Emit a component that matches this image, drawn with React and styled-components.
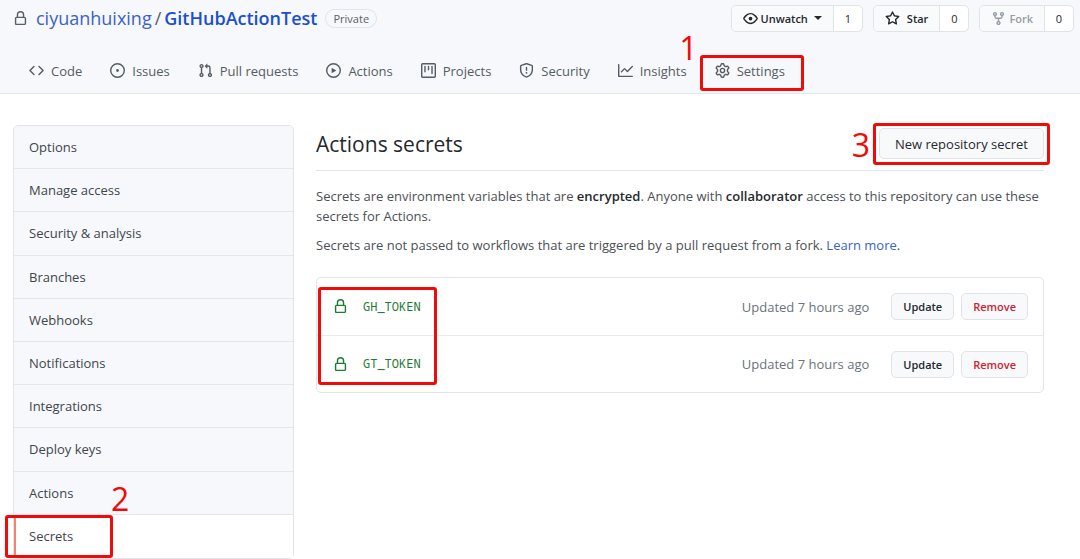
import React from "react";
import styled, { createGlobalStyle } from "styled-components";

const GlobalStyle = createGlobalStyle`
  *, *::before, *::after { box-sizing: border-box; }
  body {
    margin: 0;
    background: #fff;
    color: #24292e;
    font-family: "Open Sans", "Noto Sans", sans-serif;
    font-size: 13px;
    line-height: 20px;
    overflow-x: hidden;
  }
  a { color: inherit; text-decoration: none; }
  button { font-family: inherit; cursor: pointer; }
  h1, h2, p, ul { margin: 0; padding: 0; }
  ul { list-style: none; }
`;

const paths = {
  lock: "M4 4v2h-.25A1.75 1.75 0 002 7.75v5.5c0 .966.784 1.75 1.75 1.75h8.5A1.75 1.75 0 0014 13.25v-5.5A1.75 1.75 0 0012.25 6H12V4a4 4 0 10-8 0zm6.5 2V4a2.5 2.5 0 00-5 0v2h5zM12 7.5h.25a.25.25 0 01.25.25v5.5a.25.25 0 01-.25.25h-8.5a.25.25 0 01-.25-.25v-5.5a.25.25 0 01.25-.25H12z",
  code: "M4.72 3.22a.75.75 0 011.06 1.06L2.06 8l3.72 3.72a.75.75 0 11-1.06 1.06L.47 8.53a.75.75 0 010-1.06l4.25-4.25zm6.56 0a.75.75 0 10-1.06 1.06L13.94 8l-3.72 3.72a.75.75 0 101.06 1.06l4.25-4.25a.75.75 0 000-1.06l-4.25-4.25z",
  issue: "M8 9.5a1.5 1.5 0 100-3 1.5 1.5 0 000 3zM8 0a8 8 0 100 16A8 8 0 008 0zM1.5 8a6.5 6.5 0 1113 0 6.5 6.5 0 01-13 0z",
  pull: "M7.177 3.073L9.573.677A.25.25 0 0110 .854v4.792a.25.25 0 01-.427.177L7.177 3.427a.25.25 0 010-.354zM3.75 2.5a.75.75 0 100 1.5.75.75 0 000-1.5zm-2.25.75a2.25 2.25 0 113 2.122v5.256a2.251 2.251 0 11-1.5 0V5.372A2.25 2.25 0 011.5 3.25zM11 2.5h-1V4h1a1 1 0 011 1v5.628a2.251 2.251 0 101.5 0V5A2.5 2.5 0 0011 2.5zm1 10.25a.75.75 0 111.5 0 .75.75 0 01-1.5 0zM3.75 12a.75.75 0 100 1.5.75.75 0 000-1.5z",
  play: "M1.5 8a6.5 6.5 0 1113 0 6.5 6.5 0 01-13 0zM8 0a8 8 0 100 16A8 8 0 008 0zM6.379 5.227A.25.25 0 006 5.442v5.117a.25.25 0 00.379.214l4.264-2.559a.25.25 0 000-.428L6.379 5.227z",
  project: "M1.75 0A1.75 1.75 0 000 1.75v12.5C0 15.216.784 16 1.75 16h12.5A1.75 1.75 0 0016 14.25V1.75A1.75 1.75 0 0014.25 0H1.75zM1.5 1.75a.25.25 0 01.25-.25h12.5a.25.25 0 01.25.25v12.5a.25.25 0 01-.25.25H1.75a.25.25 0 01-.25-.25V1.75zM11.75 3a.75.75 0 00-.75.75v7.5a.75.75 0 001.5 0v-7.5a.75.75 0 00-.75-.75zm-8.25.75a.75.75 0 011.5 0v5.5a.75.75 0 01-1.5 0v-5.5zM8 3a.75.75 0 00-.75.75v3.5a.75.75 0 001.5 0v-3.5A.75.75 0 008 3z",
  shield: "M7.467.133a1.75 1.75 0 011.066 0l5.25 1.68A1.75 1.75 0 0115 3.48V7c0 1.566-.32 3.182-1.303 4.682-.983 1.498-2.585 2.813-5.032 3.855a1.7 1.7 0 01-1.33 0c-2.447-1.042-4.049-2.357-5.032-3.855C1.32 10.182 1 8.566 1 7V3.48a1.75 1.75 0 011.217-1.667l5.25-1.68zm.61 1.429a.25.25 0 00-.153 0l-5.25 1.68a.25.25 0 00-.174.238V7c0 1.358.275 2.666 1.057 3.86.784 1.194 2.121 2.34 4.366 3.297a.2.2 0 00.154 0c2.245-.956 3.582-2.104 4.366-3.298C13.225 9.666 13.5 8.36 13.5 7V3.48a.25.25 0 00-.174-.237l-5.25-1.68zM9 10.5a1 1 0 11-2 0 1 1 0 012 0zm-.25-5.75a.75.75 0 10-1.5 0v3a.75.75 0 001.5 0v-3z",
  graph: "M1.5 1.75a.75.75 0 00-1.5 0v12.5c0 .414.336.75.75.75h14.5a.75.75 0 000-1.5H1.5V1.75zm14.28 2.53a.75.75 0 00-1.06-1.06L10 7.94 7.53 5.47a.75.75 0 00-1.06 0L3.22 8.72a.75.75 0 001.06 1.06L7 7.06l2.47 2.47a.75.75 0 001.06 0l5.25-5.25z",
  gear: "M7.429 1.525a6.593 6.593 0 011.142 0c.036.003.108.036.137.146l.289 1.105c.147.56.55.967.997 1.189.174.086.341.183.501.29.417.278.97.423 1.53.27l1.102-.303c.11-.03.175.016.195.046.219.31.41.641.573.989.014.031.022.11-.059.19l-.815.806c-.411.406-.562.957-.53 1.456a4.588 4.588 0 010 .582c-.032.499.119 1.05.53 1.456l.815.806c.08.08.073.159.059.19a6.494 6.494 0 01-.573.99c-.02.029-.086.074-.195.045l-1.103-.303c-.559-.153-1.112-.008-1.529.27-.16.107-.327.204-.5.29-.449.222-.851.628-.998 1.189l-.289 1.105c-.029.11-.101.143-.137.146a6.613 6.613 0 01-1.142 0c-.036-.003-.108-.037-.137-.146l-.289-1.105c-.147-.56-.55-.967-.997-1.189a4.502 4.502 0 01-.501-.29c-.417-.278-.97-.423-1.53-.27l-1.102.303c-.11.03-.175-.016-.195-.046a6.492 6.492 0 01-.573-.989c-.014-.031-.022-.11.059-.19l.815-.806c.411-.406.562-.957.53-1.456a4.587 4.587 0 010-.582c.032-.499-.119-1.05-.53-1.456l-.815-.806c-.08-.08-.073-.159-.059-.19a6.44 6.44 0 01.573-.99c.02-.029.086-.075.195-.045l1.103.303c.559.153 1.112.008 1.529-.27.16-.107.327-.204.5-.29.449-.222.851-.628.998-1.189l.289-1.105c.029-.11.101-.143.137-.146zM8 0c-.236 0-.47.01-.701.03-.743.065-1.29.615-1.458 1.261l-.29 1.106c-.017.066-.078.158-.211.224a5.994 5.994 0 00-.668.386c-.123.082-.233.09-.3.071L3.27 2.776c-.644-.177-1.392.02-1.82.63a7.977 7.977 0 00-.704 1.217c-.315.675-.111 1.422.363 1.891l.815.806c.05.048.098.147.088.294a6.084 6.084 0 000 .772c.01.147-.038.246-.088.294l-.815.806c-.474.469-.678 1.216-.363 1.891.2.428.436.835.704 1.218.428.609 1.176.806 1.82.63l1.103-.303c.066-.019.176-.011.299.071.213.143.436.272.668.386.133.066.194.158.212.224l.289 1.106c.169.646.715 1.196 1.458 1.26a8.094 8.094 0 001.402 0c.743-.064 1.29-.614 1.458-1.26l.29-1.106c.017-.066.078-.158.211-.224a5.98 5.98 0 00.668-.386c.123-.082.233-.09.3-.071l1.102.302c.644.177 1.392-.02 1.82-.63.268-.382.505-.789.704-1.217.315-.675.111-1.422-.364-1.891l-.814-.806c-.05-.048-.098-.147-.088-.294a6.1 6.1 0 000-.772c-.01-.147.039-.246.088-.294l.814-.806c.475-.469.679-1.216.364-1.891a7.992 7.992 0 00-.704-1.218c-.428-.609-1.176-.806-1.82-.63l-1.103.303c-.066.019-.176.011-.299-.071a5.991 5.991 0 00-.668-.386c-.133-.066-.194-.158-.212-.224L10.16 1.29C9.99.645 9.444.095 8.701.031A8.094 8.094 0 008 0zm1.5 8a1.5 1.5 0 11-3 0 1.5 1.5 0 013 0zM11 8a3 3 0 11-6 0 3 3 0 016 0z",
  eye: "M1.679 7.932c.412-.621 1.242-1.75 2.366-2.717C5.175 4.242 6.527 3.5 8 3.5c1.473 0 2.824.742 3.955 1.715 1.124.967 1.954 2.096 2.366 2.717a.119.119 0 010 .136c-.412.621-1.242 1.75-2.366 2.717C10.825 11.758 9.473 12.5 8 12.5c-1.473 0-2.824-.742-3.955-1.715C2.92 9.818 2.09 8.69 1.679 8.068a.119.119 0 010-.136zM8 2c-1.981 0-3.67.992-4.933 2.078C1.797 5.169.88 6.423.43 7.1a1.619 1.619 0 000 1.798c.45.678 1.367 1.932 2.637 3.024C4.329 13.008 6.019 14 8 14c1.981 0 3.67-.992 4.933-2.078 1.27-1.091 2.187-2.345 2.637-3.023a1.619 1.619 0 000-1.798c-.45-.678-1.367-1.932-2.637-3.023C11.671 2.992 9.981 2 8 2zm0 8a2 2 0 100-4 2 2 0 000 4z",
  star: "M8 .25a.75.75 0 01.673.418l1.882 3.815 4.21.612a.75.75 0 01.416 1.279l-3.046 2.97.719 4.192a.75.75 0 01-1.088.791L8 12.347l-3.766 1.98a.75.75 0 01-1.088-.79l.72-4.194L.818 6.374a.75.75 0 01.416-1.28l4.21-.611L7.327.668A.75.75 0 018 .25zm0 2.445L6.615 5.5a.75.75 0 01-.564.41l-3.097.45 2.24 2.184a.75.75 0 01.216.664l-.528 3.084 2.769-1.456a.75.75 0 01.698 0l2.77 1.456-.53-3.084a.75.75 0 01.216-.664l2.24-2.183-3.096-.45a.75.75 0 01-.564-.41L8 2.694z",
  fork: "M5 3.25a.75.75 0 11-1.5 0 .75.75 0 011.5 0zm0 2.122a2.25 2.25 0 10-1.5 0v.878A2.25 2.25 0 005.75 8.5h1.5v2.128a2.251 2.251 0 101.5 0V8.5h1.5a2.25 2.25 0 002.25-2.25v-.878a2.25 2.25 0 10-1.5 0v.878a.75.75 0 01-.75.75h-4.5A.75.75 0 015 6.25v-.878zm3.75 7.378a.75.75 0 11-1.5 0 .75.75 0 011.5 0zm3-8.75a.75.75 0 100-1.5.75.75 0 000 1.5z",
};

const Svg = styled.svg`
  display: block;
  flex: none;
  fill: currentColor;
`;

function Icon({ name, size = 15 }) {
  return (
    <Svg viewBox="0 0 16 16" width={size} height={size} aria-hidden="true">
      <path fillRule="evenodd" d={paths[name]} />
    </Svg>
  );
}

const Header = styled.header`
  background: #f6f8fb;
  border-bottom: 1px solid #e3e6ea;
`;

const TitleBar = styled.div`
  display: flex;
  justify-content: space-between;
  align-items: center;
  height: 36px;
  padding: 0 6px 0 13px;
`;

const RepoTitle = styled.h1`
  display: flex;
  align-items: center;
  gap: 8px;
  font-size: 18px;
  font-weight: 400;
  line-height: 28px;
  color: #586069;
  white-space: nowrap;
`;

const RepoPath = styled.span`
  display: flex;
  gap: 3px;
`;

const RepoLink = styled.a`
  color: ${(p) => (p.$strong ? "#1a4fd0" : "#3a62cc")};
  font-weight: ${(p) => (p.$strong ? 600 : 400)};
`;

const Visibility = styled.span`
  padding: 0 7px;
  border: 1px solid #e1e4e8;
  border-radius: 10px;
  font-size: 11px;
  font-weight: 500;
  line-height: 17px;
  color: #586069;
`;

const RepoActions = styled.div`
  display: flex;
  gap: 10px;
`;

const ButtonGroup = styled.div`
  display: flex;
  height: 27px;
  border: 1px solid #e0e3e7;
  border-radius: 5px;
  background: #fff;
  overflow: hidden;
`;

const GroupButton = styled.button`
  display: flex;
  align-items: center;
  gap: ${(p) => p.$gap || 7}px;
  padding: 0 11px;
  border: 0;
  border-right: 1px solid #e0e3e7;
  background: #f9fafc;
  color: ${(p) => (p.disabled ? "#959da5" : "#24292e")};
  font-size: 11px;
  font-weight: 600;
`;

const Caret = styled.span`
  margin-left: 3px;
  border: 4px solid transparent;
  border-top-color: currentColor;
  border-bottom-width: 0;
`;

const Count = styled.a`
  width: 28px;
  text-align: center;
  font-size: 11px;
  font-weight: 500;
  line-height: 25px;
`;

const RepoNav = styled.nav`
  display: flex;
  align-items: center;
  gap: 28px;
  height: 57px;
  padding: 12px 29px 0;
  color: #555c64;
`;

const Tab = styled.a`
  position: relative;
  display: flex;
  align-items: center;
  gap: 7px;
  white-space: nowrap;
`;

const Frame = styled.span`
  position: absolute;
  border: 3px solid #f00a0a;
  border-radius: 3px;
  pointer-events: none;
`;

const TabFrame = styled(Frame)`
  inset: -6px -19px -10px -15px;
`;

const MenuFrame = styled(Frame)`
  inset: 0 auto 0 -9px;
  width: 108px;
`;

const ButtonFrame = styled(Frame)`
  inset: -5px -6px -6px;
`;

const TokenFrame = styled(Frame)`
  inset: 9px auto 7px 1px;
  width: 119px;
`;

const Step = styled.span`
  position: absolute;
  right: calc(100% + ${(p) => p.$right}px);
  bottom: ${(p) => p.$bottom}px;
  color: #f00a0a;
  font-size: 32px;
  font-weight: 400;
  line-height: 32px;
`;

const MenuStep = styled(Step)`
  right: auto;
  left: 97px;
`;

const Layout = styled.div`
  display: grid;
  grid-template-columns: 281px minmax(0, 1fr);
  gap: 22px;
  align-items: start;
  padding: 31px 36px 0 13px;
`;

const Menu = styled.nav`
  display: grid;
  grid-auto-rows: 1fr;
  min-height: 434px;
  border: 1px solid #e1e4e8;
  border-radius: 5px;
`;

const MenuItem = styled.a`
  position: relative;
  display: flex;
  align-items: center;
  padding: 0 15px;
  border-bottom: 1px solid #e3e6ea;
  background: ${(p) => (p.$current ? "#fff" : "#f6f8fb")};
  color: #40464d;

  &:first-child { border-radius: 4px 4px 0 0; }
  &:last-child { border-bottom: 0; }
`;

const Marker = styled.span`
  position: absolute;
  inset: 0 auto 0 0;
  width: 2px;
  background: #f9826c;
`;

const Subhead = styled.div`
  display: flex;
  justify-content: space-between;
  align-items: center;
  height: 46px;
  padding-bottom: 8px;
  border-bottom: 1px solid #e1e4e8;
`;

const Heading = styled.h2`
  font-size: 21px;
  font-weight: 400;
  line-height: 32px;
`;

const Anchor = styled.div`
  position: relative;
  display: flex;
`;

const Button = styled.button`
  height: ${(p) => (p.$large ? 31 : 27)}px;
  padding: 0 ${(p) => (p.$large ? 15 : 11)}px;
  border: 1px solid #e0e3e7;
  border-radius: 5px;
  background: #f8f9fb;
  color: ${(p) => (p.$danger ? "#cb2431" : "#24292e")};
  font-size: ${(p) => (p.$large ? 13 : 11)}px;
  font-weight: ${(p) => (p.$large ? 500 : 600)};
  white-space: nowrap;
`;

const Intro = styled.div`
  display: grid;
  gap: 9px;
  padding: 15px 0 22px;
  color: #4a5056;

  strong { font-weight: 600; color: #24292e; }
  a { color: #3a62cc; }
`;

const SecretList = styled.ul`
  position: relative;
  border: 1px solid #e1e4e8;
  border-radius: 5px;
`;

const SecretRow = styled.li`
  display: flex;
  align-items: center;
  height: 57px;
  padding: 0 15px 0 16px;
  color: #1f7a35;

  & + & { border-top: 1px solid #e8eaed; }
`;

const SecretName = styled.code`
  flex: 1;
  margin-left: 15px;
  font-family: "Noto Sans Mono", "DejaVu Sans Mono", monospace;
  font-size: 12px;
`;

const Updated = styled.span`
  margin-right: 22px;
  color: #6a737d;
`;

const RowActions = styled.div`
  display: flex;
  gap: 7px;
`;

const tabs = [
  ["code", "Code"],
  ["issue", "Issues"],
  ["pull", "Pull requests"],
  ["play", "Actions"],
  ["project", "Projects"],
  ["shield", "Security"],
  ["graph", "Insights"],
  ["gear", "Settings"],
];

const menu = [
  "Options",
  "Manage access",
  "Security & analysis",
  "Branches",
  "Webhooks",
  "Notifications",
  "Integrations",
  "Deploy keys",
  "Actions",
  "Secrets",
];

export default function App() {
  return (
    <>
      <GlobalStyle />
      <Header>
        <TitleBar>
          <RepoTitle>
            <Icon name="lock" />
            <RepoPath>
              <RepoLink href="#owner">ciyuanhuixing</RepoLink>
              <span>/</span>
              <RepoLink href="#repo" $strong>GitHubActionTest</RepoLink>
            </RepoPath>
            <Visibility>Private</Visibility>
          </RepoTitle>
          <RepoActions>
            <ButtonGroup>
              <GroupButton type="button" $gap={3}>
                <Icon name="eye" />
                Unwatch
                <Caret />
              </GroupButton>
              <Count href="#watchers">1</Count>
            </ButtonGroup>
            <ButtonGroup>
              <GroupButton type="button">
                <Icon name="star" />
                Star
              </GroupButton>
              <Count href="#stars">0</Count>
            </ButtonGroup>
            <ButtonGroup>
              <GroupButton type="button" disabled $gap={3}>
                <Icon name="fork" />
                Fork
              </GroupButton>
              <Count href="#forks">0</Count>
            </ButtonGroup>
          </RepoActions>
        </TitleBar>
        <RepoNav aria-label="Repository">
          {tabs.map(([icon, label]) => (
            <Tab key={label} href={`#${icon}`}>
              <Icon name={icon} />
              {label}
              {label === "Settings" && (
                <>
                  <TabFrame />
                  <Step $right={17} $bottom={17}>1</Step>
                </>
              )}
            </Tab>
          ))}
        </RepoNav>
      </Header>
      <Layout>
        <Menu aria-label="Settings">
          {menu.map((label) => {
            const current = label === "Secrets";
            return (
              <MenuItem key={label} href={`#${label}`} $current={current}>
                {label}
                {current && (
                  <>
                    <Marker />
                    <MenuFrame />
                    <MenuStep $bottom={43}>2</MenuStep>
                  </>
                )}
              </MenuItem>
            );
          })}
        </Menu>
        <main>
          <Subhead>
            <Heading>Actions secrets</Heading>
            <Anchor>
              <Button type="button" $large>New repository secret</Button>
              <ButtonFrame />
              <Step $right={9} $bottom={-2}>3</Step>
            </Anchor>
          </Subhead>
          <Intro>
            <p>
              Secrets are environment variables that are <strong>encrypted</strong>. Anyone with{" "}
              <strong>collaborator</strong> access to this repository can use these secrets for Actions.
            </p>
            <p>
              Secrets are not passed to workflows that are triggered by a pull request from a fork.{" "}
              <a href="#learn">Learn more</a>.
            </p>
          </Intro>
          <SecretList>
            {["GH_TOKEN", "GT_TOKEN"].map((name) => (
              <SecretRow key={name}>
                <Icon name="lock" />
                <SecretName>{name}</SecretName>
                <Updated>Updated 7 hours ago</Updated>
                <RowActions>
                  <Button type="button">Update</Button>
                  <Button type="button" $danger>Remove</Button>
                </RowActions>
              </SecretRow>
            ))}
            <TokenFrame as="li" aria-hidden="true" />
          </SecretList>
        </main>
      </Layout>
    </>
  );
}
